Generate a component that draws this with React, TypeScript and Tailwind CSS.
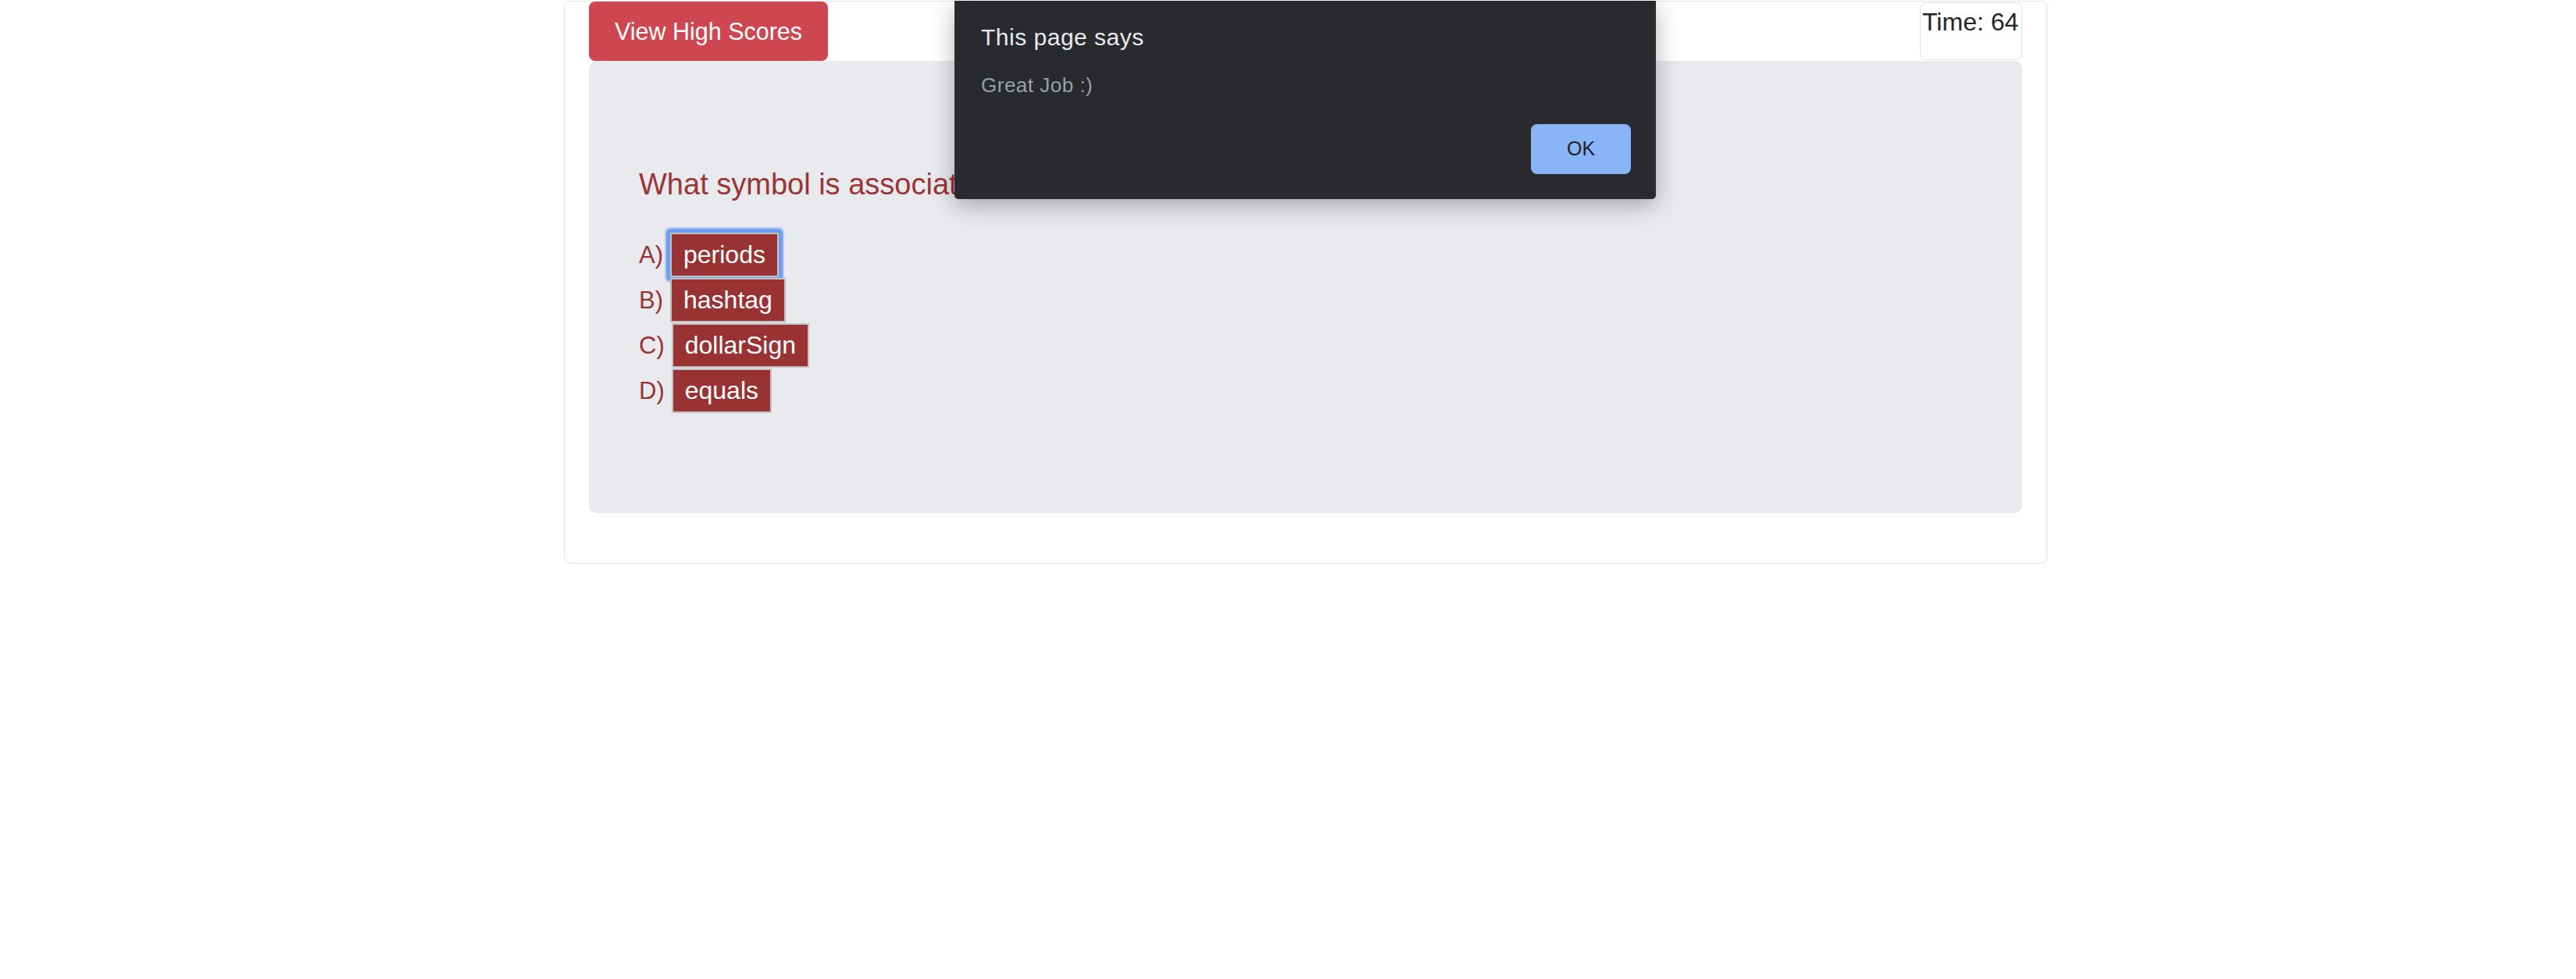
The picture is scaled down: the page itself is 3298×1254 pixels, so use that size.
import React from "react";

const options = [
  { label: "A)", text: "periods", focused: true },
  { label: "B)", text: "hashtag" },
  { label: "C)", text: "dollarSign" },
  { label: "D)", text: "equals" },
];

export default function App() {
  return (
    <div
      className="relative min-h-[1254px] w-full bg-white text-[#212529]"
      style={{ fontFamily: '"Liberation Sans", Arial, sans-serif' }}
    >
      {/* Card */}
      <div className="ml-[722px] mt-[1px] w-[1899px] rounded-[8px] border border-[#dfe2e6] px-[31px] pb-[64px]">
        {/* Header row */}
        <div className="flex items-start justify-between">
          <button className="flex h-[76px] w-[306px] items-center justify-center rounded-[8px] bg-[#cd4650] text-[30.5px] leading-[48px] text-white">
            View High Scores
          </button>
          <div className="mt-[1px] h-[74px] w-[131px] rounded-[8px] border border-[#dfe2e6] pl-[2px] text-[32px] leading-[48px] text-[#212529]">
            Time: 64
          </div>
        </div>

        {/* Jumbotron */}
        <div className="rounded-[10px] bg-[#e9eaee] px-[64px] py-[128px]">
          <p className="mb-[32px] text-[38px] leading-[60px] text-[#9b3434]">
            What symbol is associated with classes?
          </p>
          <div className="flex flex-col gap-[1px]">
            {options.map((o) => (
              <div key={o.text} className="flex h-[57px] items-baseline text-[#993333]">
                <span className="text-[31px] leading-[37px]">{o.label}</span>
                <button
                  className={
                    "ml-[9px] h-[57px] border-2 border-[#c3c3c3] bg-[#993333] px-[15px] py-[8px] text-[32px] leading-[37px] text-white " +
                    (o.focused
                      ? "rounded-[2px] shadow-[0_0_0_5px_#6e9eee,0_0_0_7px_rgba(120,165,240,0.45)]"
                      : "")
                  }
                >
                  {o.text}
                </button>
              </div>
            ))}
          </div>
        </div>
      </div>

      {/* Alert dialog overlay */}
      <div className="absolute left-[1222px] top-0 w-[898px] rounded-b-[5px] bg-[#292a2d] pb-[32px] pl-[34px] pr-[32px] pt-[29px] shadow-[0_8px_30px_rgba(0,0,0,0.3)]">
        <div className="text-[30px] leading-[36px] tracking-[0.5px] text-[#e8eaed]">This page says</div>
        <div className="mt-[28px] text-[26px] leading-[30px] tracking-[0.5px] text-[#9aa0a6]">Great Job :)</div>
        <div className="mt-[35px] flex justify-end">
          <button className="h-[64px] w-[128px] rounded-[8px] bg-[#8ab4f8] text-[25px] font-medium text-[#202124]">
            OK
          </button>
        </div>
      </div>
    </div>
  );
}
